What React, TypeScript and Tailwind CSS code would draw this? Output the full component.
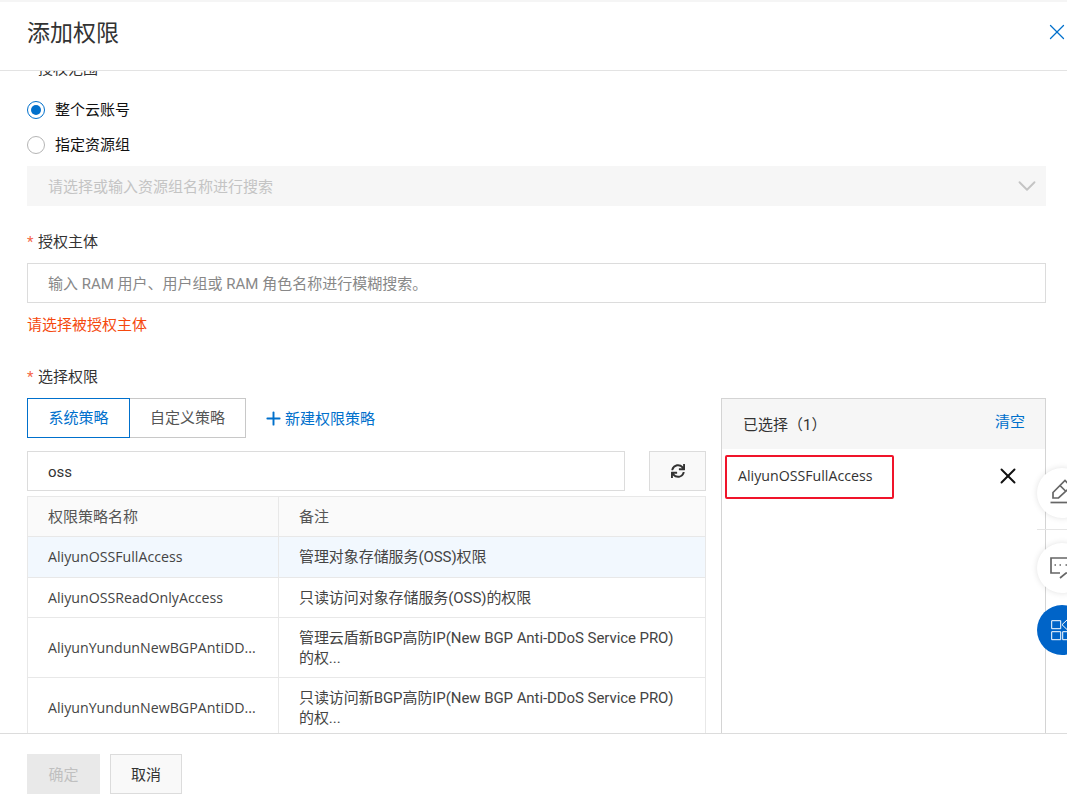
import { X, ChevronDown, Plus } from 'lucide-react'
import { FaSync } from 'react-icons/fa'

const rows = [
  { name: 'AliyunOSSFullAccess', note: '管理对象存储服务(OSS)权限', h: 'h-[41px]', active: true },
  { name: 'AliyunOSSReadOnlyAccess', note: '只读访问对象存储服务(OSS)的权限', h: 'h-10' },
  { name: 'AliyunYundunNewBGPAntiDD...', note: '管理云盾新BGP高防IP(New BGP Anti-DDoS Service PRO)的权...', h: 'h-[60px]' },
  { name: 'AliyunYundunNewBGPAntiDD...', note: '只读访问新BGP高防IP(New BGP Anti-DDoS Service PRO)的权...', h: 'h-[60px]' },
]

function Star() {
  return <span className="inline-block w-[11px] text-[#f5674a]">*</span>
}

export default function App() {
  return (
    <div className="relative flex h-screen flex-col overflow-hidden bg-white font-['Roboto','Noto_Sans_CJK_SC',sans-serif] text-[15px] text-[#333]">
      {/* Header */}
      <div className="relative z-10 flex h-[71px] shrink-0 items-center justify-between border-b border-t-2 border-b-[#e3e3e3] border-t-[#f5f5f5] bg-white pb-[4px] pl-[27px]">
        <h1 className="text-[23px] font-normal text-[#333]">添加权限</h1>
        <X className="-mr-[3px] -mt-[5px] h-[26px] w-[26px] text-[#0070cc]" strokeWidth={1.2} />
      </div>

      {/* Body */}
      <div className="flex-1 overflow-hidden pl-[27px] pr-[21px]">
        <div className="-mt-[12px] leading-5"><span className="ml-[11px]">授权范围</span></div>

        <label className="mt-[21px] flex h-5 items-center gap-[10px] text-[#111]">
          <span className="flex h-[18px] w-[18px] items-center justify-center rounded-full border border-[#0070cc]">
            <span className="h-[10px] w-[10px] rounded-full bg-[#0070cc]" />
          </span>
          整个云账号
        </label>
        <label className="mt-[15px] flex h-5 items-center gap-[10px] text-[#111]">
          <span className="h-[18px] w-[18px] rounded-full border border-[#b5b5b5]" />
          指定资源组
        </label>
        <div className="mt-[11px] flex h-10 items-center justify-between bg-[#f6f6f6] pl-[21px] pr-[4px] text-[#c4c4c4]">
          <span className="pt-[2px]">请选择或输入资源组名称进行搜索</span>
          <ChevronDown className="h-[30px] w-[30px] text-[#c4c4c4]" strokeWidth={1.5} />
        </div>

        <div className="mt-[25px] h-5 pt-px leading-5"><Star />授权主体</div>
        <div className="mt-[12px] flex h-10 items-center border border-[#dcdcdc] pl-5 pt-[2px] text-[#888]">
          输入 RAM 用户、用户组或 RAM 角色名称进行模糊搜索。
        </div>
        <div className="mt-[11px] h-5 pt-px leading-5 text-[#f5490e]">请选择被授权主体</div>

        <div className="mt-[32px] h-5 pt-px leading-5"><Star />选择权限</div>

        <div className="mt-[12px] flex gap-[15px]">
          <div className="w-[679px] shrink-0">
            <div className="flex h-10 items-center">
              <button className="h-10 w-[103px] border border-[#0070cc] text-[#0070cc]">系统策略</button>
              <button className="h-10 w-[116px] border border-l-0 border-[#c8c8c8] text-[#555]">自定义策略</button>
              <span className="ml-[17px] flex items-center gap-[1px] text-[#0070cc]">
                <Plus className="h-[21px] w-[21px]" strokeWidth={2.2} />
                <span className="pt-[2px]">新建权限策略</span>
              </span>
            </div>
            <div className="mt-[13px] flex justify-between">
              <div className="flex h-10 w-[598px] items-center border border-[#dcdcdc] pl-5 pt-[2px]">oss</div>
              <div className="flex h-10 w-[57px] items-center justify-center border border-[#dcdcdc] bg-[#f9f9f9]">
                <FaSync className="h-[14px] w-[14px] text-[#333]" />
              </div>
            </div>
            <div className="mt-[5px] border-x border-t border-[#e8e8e8]">
              <div className="flex h-10 border-b border-[#e8e8e8] bg-[#fafafa] text-[#555]">
                <div className="flex w-[251px] items-center border-r border-[#e8e8e8] pl-5 pt-[2px]">权限策略名称</div>
                <div className="flex flex-1 items-center pl-5 pt-[2px]">备注</div>
              </div>
              {rows.map((r, i) => (
                <div key={i} className={`flex ${r.h} border-b border-[#e8e8e8] ${r.active ? 'bg-[#f2f8fe]' : ''} text-[#444]`}>
                  <div className="flex w-[251px] items-center border-r border-[#e8e8e8] pl-5 font-['Open_Sans',sans-serif] text-[14.2px]">{r.name}</div>
                  <div className="flex flex-1 items-center px-5 leading-[20px] tracking-[-0.07px]">{r.note}</div>
                </div>
              ))}
            </div>
          </div>

          {/* Selected panel */}
          <div className="w-[325px] shrink-0 self-stretch border-x border-t border-[#d4d4d4]">
            <div className="flex h-[50px] items-center justify-between bg-[#f6f6f6] pl-[21px] pr-[20px]">
              <span className="pt-[2px]">已选择（1）</span>
              <span className="-mt-[4px] text-[#0070cc]">清空</span>
            </div>
            <div className="flex h-[54px] items-center justify-between pl-[16px] pr-[24px]">
              <span className="font-['Open_Sans',sans-serif] text-[14.2px]">AliyunOSSFullAccess</span>
              <X className="h-[26px] w-[26px] text-[#111]" strokeWidth={1.8} />
            </div>
          </div>
        </div>
      </div>

      {/* Footer */}
      <div className="relative z-10 flex h-[67px] shrink-0 items-start gap-[10px] border-t border-[#dcdcdc] bg-white pl-[27px] pt-[20px]">
        <button className="h-10 w-[73px] bg-[#e9e9e9] pt-[2px] text-[#c0c0c0]">确定</button>
        <button className="h-10 w-[72px] border border-[#dcdcdc] bg-[#f9f9f9] pt-[2px]">取消</button>
      </div>

      {/* Red highlight, drawn over the screenshot */}
      <div className="absolute left-[725px] top-[455px] z-20 h-[44px] w-[169px] rounded-[2px] border-[2px] border-[#f0142a]" />

      {/* Floating tools */}
      <div className="absolute left-[1037px] top-[468px] z-20 flex h-[50px] w-[50px] items-center rounded-full bg-white pl-[13px] shadow-[0_0_6px_rgba(0,0,0,0.12)]">
        <svg width="30" height="30" viewBox="0 0 30 30" fill="none" stroke="#666" strokeWidth="1.7">
          <path d="M3 20v-5.5L15 2.5l6 6L8.5 20z" />
          <path d="M10 7.5l6 6" />
          <path d="M0.5 24.5H24" />
        </svg>
      </div>
      <div className="absolute left-[1037px] top-[529px] z-20 h-px w-[30px] bg-[#e5e5e5]" />
      <div className="absolute left-[1037px] top-[543px] z-20 flex h-[50px] w-[50px] items-center rounded-full bg-white pl-[13px] shadow-[0_0_6px_rgba(0,0,0,0.12)]">
        <svg width="30" height="30" viewBox="0 0 30 30" fill="none" stroke="#666" strokeWidth="1.7">
          <path d="M30 5H1v15h9" />
          <path d="M10 25l6-5h14" />
          <path d="M4.5 12h1.5M9.5 12h1.5M15.5 12h1.5" />
        </svg>
      </div>
      <div className="absolute left-[1037px] top-[605px] z-20 flex h-[50px] w-[50px] items-center rounded-full bg-[#0064c8] pl-[14px]">
        <svg width="30" height="30" viewBox="0 0 30 30" fill="none" stroke="#fff" strokeWidth="1">
          <path d="M0.7 5.7h9v8h-9zM0.7 16.7h9v8h-9zM11.7 16.7h9v8h-9zM16.5 4.5l5.5 5.2-5.5 5.3-5.5-5.3z" />
        </svg>
      </div>
    </div>
  )
}
